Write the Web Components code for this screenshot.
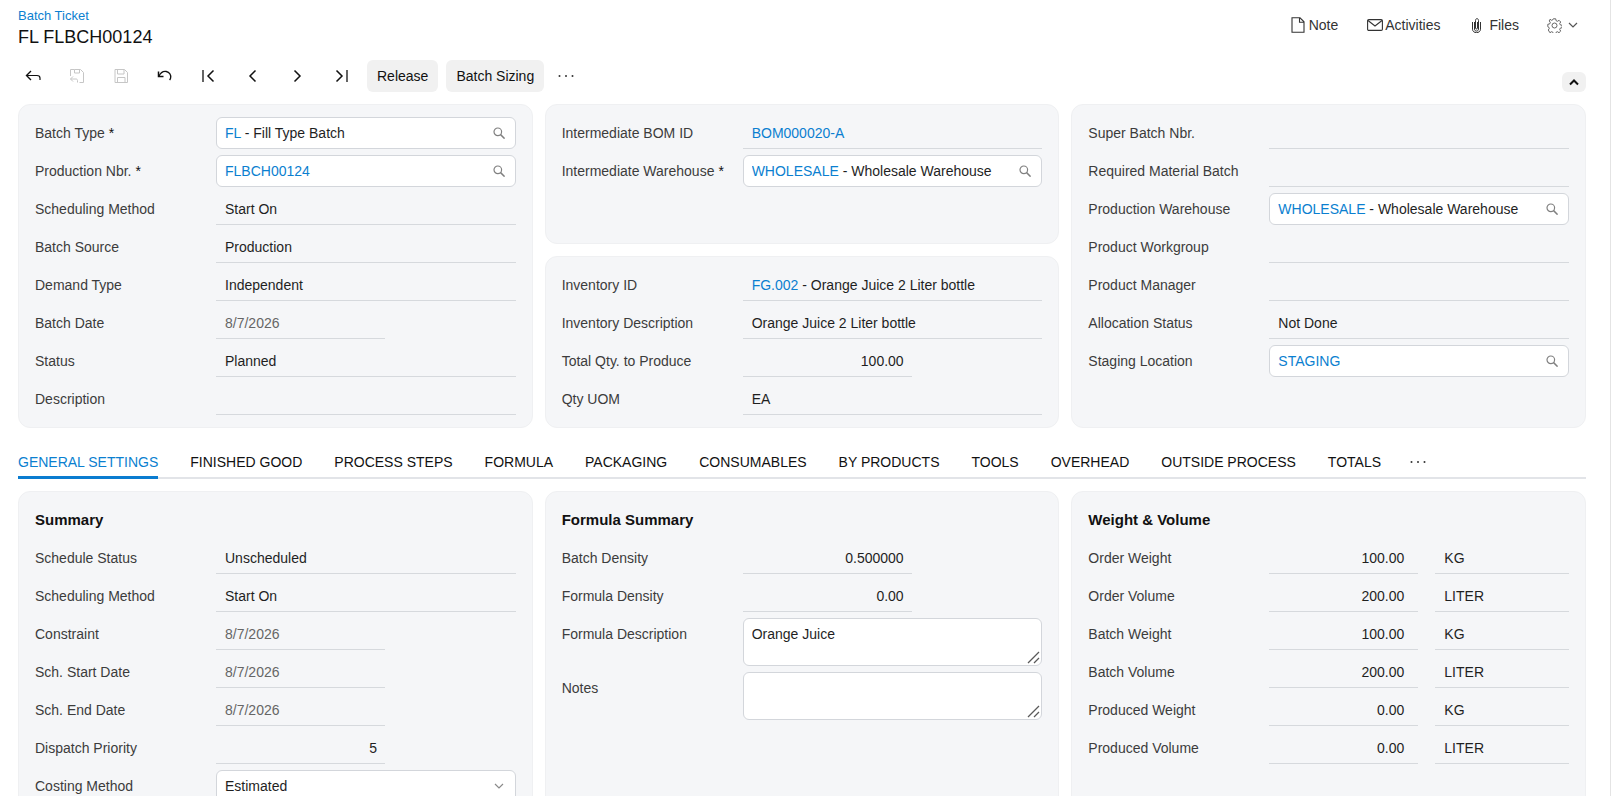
<!DOCTYPE html>
<html>
<head>
<meta charset="utf-8">
<title>Batch Ticket</title>
<style>
  html, body { margin: 0; height: 100%; overflow: hidden; background: #fff; }
  body { font: 14px "Liberation Sans", Arial, sans-serif; color: #1f1f1f; }
</style>
</head>
<body>
<batch-page>
  <page-header slot="header" crumb="Batch Ticket" heading="FL FLBCH00124"></page-header>
  <page-toolbar slot="toolbar"></page-toolbar>

  <panel-grid slot="top" class="top">
    <form-card style="grid-row: span 2">
      <form-field label="Batch Type" required kind="lookup" code="FL"> - Fill Type Batch</form-field>
      <form-field label="Production Nbr." required kind="lookup" code="FLBCH00124"></form-field>
      <form-field label="Scheduling Method">Start On</form-field>
      <form-field label="Batch Source">Production</form-field>
      <form-field label="Demand Type">Independent</form-field>
      <form-field label="Batch Date" kind="date">8/7/2026</form-field>
      <form-field label="Status">Planned</form-field>
      <form-field label="Description"></form-field>
    </form-card>
    <form-card>
      <form-field label="Intermediate BOM ID" code="BOM000020-A"></form-field>
      <form-field label="Intermediate Warehouse" required kind="lookup" code="WHOLESALE"> - Wholesale Warehouse</form-field>
    </form-card>
    <form-card style="grid-row: span 2">
      <form-field label="Super Batch Nbr."></form-field>
      <form-field label="Required Material Batch"></form-field>
      <form-field label="Production Warehouse" kind="lookup" code="WHOLESALE"> - Wholesale Warehouse</form-field>
      <form-field label="Product Workgroup"></form-field>
      <form-field label="Product Manager"></form-field>
      <form-field label="Allocation Status">Not Done</form-field>
      <form-field label="Staging Location" kind="lookup" code="STAGING"></form-field>
    </form-card>
    <form-card>
      <form-field label="Inventory ID" code="FG.002"> - Orange Juice 2 Liter bottle</form-field>
      <form-field label="Inventory Description">Orange Juice 2 Liter bottle</form-field>
      <form-field label="Total Qty. to Produce" kind="number">100.00</form-field>
      <form-field label="Qty UOM">EA</form-field>
    </form-card>
  </panel-grid>

  <tab-strip slot="tabs" active="GENERAL SETTINGS"
    tabs="GENERAL SETTINGS|FINISHED GOOD|PROCESS STEPS|FORMULA|PACKAGING|CONSUMABLES|BY PRODUCTS|TOOLS|OVERHEAD|OUTSIDE PROCESS|TOTALS"></tab-strip>

  <panel-grid slot="bottom">
    <form-card heading="Summary">
      <form-field label="Schedule Status">Unscheduled</form-field>
      <form-field label="Scheduling Method">Start On</form-field>
      <form-field label="Constraint" kind="date">8/7/2026</form-field>
      <form-field label="Sch. Start Date" kind="date">8/7/2026</form-field>
      <form-field label="Sch. End Date" kind="date">8/7/2026</form-field>
      <form-field label="Dispatch Priority" kind="number">5</form-field>
      <form-field label="Costing Method" kind="select">Estimated</form-field>
    </form-card>
    <form-card heading="Formula Summary">
      <form-field label="Batch Density" kind="number">0.500000</form-field>
      <form-field label="Formula Density" kind="number">0.00</form-field>
      <form-field label="Formula Description" kind="area">Orange Juice</form-field>
      <form-field label="Notes" kind="area"></form-field>
    </form-card>
    <form-card heading="Weight &amp; Volume">
      <form-field label="Order Weight" kind="measure" unit="KG">100.00</form-field>
      <form-field label="Order Volume" kind="measure" unit="LITER">200.00</form-field>
      <form-field label="Batch Weight" kind="measure" unit="KG">100.00</form-field>
      <form-field label="Batch Volume" kind="measure" unit="LITER">200.00</form-field>
      <form-field label="Produced Weight" kind="measure" unit="KG">0.00</form-field>
      <form-field label="Produced Volume" kind="measure" unit="LITER">0.00</form-field>
    </form-card>
  </panel-grid>
</batch-page>

<script>
const svg = (w, h, body, extra = '') =>
  `<svg width="${w}" height="${h}" viewBox="0 0 ${w} ${h}" fill="none" stroke="currentColor" ${extra}>${body}</svg>`;

const icons = {
  back: svg(16, 16, '<path d="M6 3 1.500 7.500 6 12" stroke-width="1.400"/><path d="M1.500 7.500h10.500c1.800 0 3 1 3 2.600V12" stroke-width="1.200"/>'),
  saveBack: svg(16, 16, '<path d="M5.500 1.500h6l3 3v10h-4M1.500 8V1.500h4m0 0v3.500h5v-3.500M4 8.500l-2.500 2.500L4 13.500M1.500 11H7c1 0 1.500.6 1.500 1.500v2" stroke-width="1"/>'),
  save: svg(16, 16, '<path d="M2 1.500h9.500l3 3v10H2zM4.500 1.500V6h6.500V1.500M4.500 14.500V9.500h7.500v5" stroke-width="1"/>'),
  undo: svg(16, 16, '<path d="M1.500 3.500v5h5" stroke-width="1.500"/><path d="M1.900 8.300C3.500 4.800 6.500 3 9.300 3.500c3.200.6 5 3.500 4.300 6.500-.2.800-.5 1.400-1 2" stroke-width="1.300"/>'),
  first: svg(16, 16, '<path d="M2 2v12" stroke-width="1.300"/><path d="M12.500 2.500 7 8l5.500 5.500" stroke-width="1.500"/>'),
  prev: svg(16, 16, '<path d="M10.500 2.500 5 8l5.500 5.500" stroke-width="1.500"/>'),
  next: svg(16, 16, '<path d="M5.500 2.500 11 8l-5.500 5.500" stroke-width="1.500"/>'),
  last: svg(16, 16, '<path d="M14 2v12" stroke-width="1.300"/><path d="M3.500 2.500 9 8l-5.500 5.500" stroke-width="1.500"/>'),
  dots: svg(16, 16, '<circle cx="1.500" cy="8" r="1" fill="currentColor" stroke="none"/><circle cx="8" cy="8" r="1" fill="currentColor" stroke="none"/><circle cx="14.500" cy="8" r="1" fill="currentColor" stroke="none"/>'),
  note: svg(14, 16, '<path d="M1 .8h8l4 4v10.400H1zM8.500 1v4.300H13" stroke-width="1.100"/>'),
  mail: svg(16, 14, '<rect x=".6" y="1.600" width="14.800" height="10.800" rx="1.200" stroke-width="1.100"/><path d="m1 2.500 7 5.500 7-5.500" stroke-width="1.100"/>'),
  clip: svg(11, 16, '<path d="M3.500 5v7c0 2.800 4 2.800 4 0V3.500C7.500 1 4.500 1 4.500 3.500V11c0 1.300 2 1.300 2 0V5" stroke-width="1"/><path d="M1.500 5v7.200c0 4.600 8 4.600 8 0V5" stroke-width="1"/>'),
  gear: svg(15, 15, '<circle cx="7.500" cy="7.500" r="2.500" stroke-width=".9"/><path d="M6.300.8h2.400l.4 1.900 1.300.6 1.700-1 1.600 1.700-1 1.600.6 1.300 1.900.4v2.400l-1.900.4-.6 1.300 1 1.700-1.700 1.600-1.600-1-1.300.6-.4 1.900H6.300l-.4-1.900-1.300-.6-1.700 1L1.300 12l1-1.600-.6-1.300L.8 8.700V6.300l1.900-.4.6-1.300-1-1.700L3 1.300l1.600 1 1.300-.6z" stroke-width=".9"/>'),
  chevron: svg(10, 6, '<path d="m1 1 4 4 4-4" stroke-width="1.200"/>'),
  chevronUp: svg(10, 7, '<path d="m1 5.500 4-4 4 4" stroke-width="2"/>'),
  search: svg(12, 12, '<circle cx="4.800" cy="4.800" r="3.800" stroke-width="1.200"/><path d="m7.600 7.600 4 4" stroke-width="1.500"/>'),
  grip: svg(13, 13, '<path d="M1 12 12 1M7 12l5-5" stroke-width="1.300"/>'),
};

customElements.define('batch-page', class BatchPage extends HTMLElement {
  constructor() {
    super();
    this.attachShadow({ mode: 'open' }).innerHTML = `
      <style>
        :host { display: block; padding: 0 24px 0 18px; border-right: 1px solid #e4e4e4; box-sizing: border-box; }
        .tabs { display: block; margin: 11px 0 12px; }
        .top { display: block; margin-top: 12px; }
      </style>
      <slot name="header"></slot>
      <slot name="toolbar"></slot>
      <div class="top"><slot name="top"></slot></div>
      <div class="tabs"><slot name="tabs"></slot></div>
      <slot name="bottom"></slot>`;
  }
});

customElements.define('page-header', class PageHeader extends HTMLElement {
  connectedCallback() {
    this.attachShadow({ mode: 'open' }).innerHTML = `
      <style>
        :host { display: flex; justify-content: space-between; height: 60px; }
        .crumb { color: #0b7fd0; font-size: 13px; line-height: 14px; padding-top: 9px; }
        h1 { margin: 3px 0 0; font-size: 18px; font-weight: 400; line-height: 22px; color: #111; }
        .actions { display: flex; align-items: center; height: 50px; padding-right: 8px; color: #333; }
        .act { display: flex; align-items: center; margin-left: 29px; }
        .note { gap: 4px; }
        .mail { gap: 2px; }
        .files { gap: 7px; margin-left: 31px; }
        .gear { display: flex; align-items: center; gap: 6px; margin-left: 28px; color: #555; }
        svg { display: block; }
      </style>
      <div>
        <div class="crumb">${this.getAttribute('crumb')}</div>
        <h1>${this.getAttribute('heading')}</h1>
      </div>
      <div class="actions">
        <div class="act note">${icons.note}<span>Note</span></div>
        <div class="act mail">${icons.mail}<span>Activities</span></div>
        <div class="act files">${icons.clip}<span>Files</span></div>
        <div class="gear">${icons.gear}${icons.chevron}</div>
      </div>`;
  }
});

customElements.define('page-toolbar', class PageToolbar extends HTMLElement {
  connectedCallback() {
    const btn = (name, off) => `<span class="ico${off ? ' off' : ''}">${icons[name]}</span>`;
    this.attachShadow({ mode: 'open' }).innerHTML = `
      <style>
        :host { display: flex; align-items: center; height: 32px; margin-left: -7px; color: #111; }
        .ico { width: 44px; height: 32px; display: flex; align-items: center; justify-content: center; flex: none; }
        .off { color: #c6c6c6; }
        .txt { height: 32px; line-height: 32px; padding: 0 10px; background: #f1f1f1; border-radius: 6px; margin-left: 4px; margin-right: 4px; }
        .dots { margin-left: 0; width: 36px; color: #333; }
        .up { margin-left: auto; align-self: flex-end; width: 24px; height: 20px; background: #f1f1f1; border-radius: 6px; display: flex; align-items: center; justify-content: center; }
        svg { display: block; }
      </style>
      ${btn('back')}${btn('saveBack', true)}${btn('save', true)}${btn('undo')}
      ${btn('first')}${btn('prev')}${btn('next')}${btn('last')}
      <span class="txt">Release</span><span class="txt">Batch Sizing</span>
      <span class="ico dots">${icons.dots}</span>
      <span class="up">${icons.chevronUp}</span>`;
  }
});

customElements.define('panel-grid', class PanelGrid extends HTMLElement {
  connectedCallback() {
    const rows = this.classList.contains('top') ? 'grid-template-rows: 140px 172px;' : '';
    this.attachShadow({ mode: 'open' }).innerHTML = `
      <style>
        :host { display: grid; grid-template-columns: repeat(3, 1fr); gap: 12px; ${rows} }
      </style>
      <slot></slot>`;
  }
});

customElements.define('form-card', class FormCard extends HTMLElement {
  connectedCallback() {
    const heading = this.getAttribute('heading');
    this.attachShadow({ mode: 'open' }).innerHTML = `
      <style>
        :host { display: block; background: #f5f6f8; border: 1px solid #eff0f2; border-radius: 12px; padding: 12px 16px; box-sizing: border-box; min-width: 0; }
        h2 { margin: 0 0 6px; font-size: 15px; font-weight: 700; line-height: 32px; color: #111; }
      </style>
      ${heading ? `<h2>${heading}</h2>` : ''}
      <slot></slot>`;
  }
});

customElements.define('form-field', class FormField extends HTMLElement {
  connectedCallback() {
    const kind = this.getAttribute('kind') || 'text';
    const code = this.getAttribute('code');
    const unit = this.getAttribute('unit');
    const star = this.hasAttribute('required') ? '<span class="star">*</span>' : '';
    const trail = { lookup: icons.search, select: icons.chevron, area: icons.grip }[kind] || '';
    const value = `${code ? `<span class="code">${code}</span>` : ''}<slot></slot>`;
    this.attachShadow({ mode: 'open' }).innerHTML = `
      <style>
        :host { display: grid; grid-template-columns: 181px 1fr; margin-bottom: 6px; line-height: 32px; }
        .label { color: #3c3c3c; white-space: nowrap; }
        .star { color: #111; margin-left: 4px; }
        .box { box-sizing: border-box; min-height: 32px; height: 32px; padding: 0 10px 0 9px; border-bottom: 1px solid #d6d9dd; color: #1f1f1f; white-space: nowrap; }
        .code { color: #0b7fd0; }
        .lookup, .select, .area { display: flex; justify-content: space-between; align-items: center; padding-left: 8px; background: #fff; border: 1px solid #d3d6db; border-radius: 6px; }
        .lookup, .select { line-height: 30px; }
        .text-wrap { flex: 1; min-width: 0; overflow: hidden; }
        .lookup svg { color: #808080; flex: none; }
        .select svg { color: #8a8a8a; flex: none; margin-right: 1px; }
        .area { height: 48px; position: relative; align-items: flex-start; line-height: 30px; }
        .area svg { position: absolute; right: 1px; bottom: 1px; color: #5a5a5a; }
        .date { width: 169px; color: #666; }
        .number { width: 169px; text-align: right; padding-right: 8px; }
        .measure-row { display: grid; grid-template-columns: 149px 1fr; gap: 17px; }
        .measure { text-align: right; padding-right: 14px; }
      </style>
      <div class="label">${this.getAttribute('label')}${star}</div>
      ${kind === 'measure'
        ? `<div class="measure-row"><div class="box measure">${value}</div><div class="box">${unit}</div></div>`
        : `<div class="box ${kind}"><span class="text-wrap">${value}</span>${trail}</div>`}`;
  }
});

customElements.define('tab-strip', class TabStrip extends HTMLElement {
  connectedCallback() {
    const active = this.getAttribute('active');
    const tabs = this.getAttribute('tabs').split('|').map((t) =>
      `<span class="tab${t === active ? ' on' : ''}">${t}</span>`).join('');
    this.attachShadow({ mode: 'open' }).innerHTML = `
      <style>
        :host { display: flex; align-items: stretch; gap: 32px; height: 38px; border-bottom: 2px solid #e2e4e8; box-sizing: content-box; font-size: 14px; color: #111; }
        .tab { line-height: 46px; height: 38px; box-sizing: content-box; margin-bottom: -2px; border-bottom: 2px solid transparent; white-space: nowrap; }
        .on { color: #0b7fd0; border-bottom: 3px solid #0a7cd0; margin-bottom: -2px; height: 37px; }
        .more { display: flex; align-items: center; color: #333; margin-left: -3px; padding-top: 8px; }
      </style>
      ${tabs}<span class="more">${icons.dots}</span>`;
  }
});
</script>
</body>
</html>
